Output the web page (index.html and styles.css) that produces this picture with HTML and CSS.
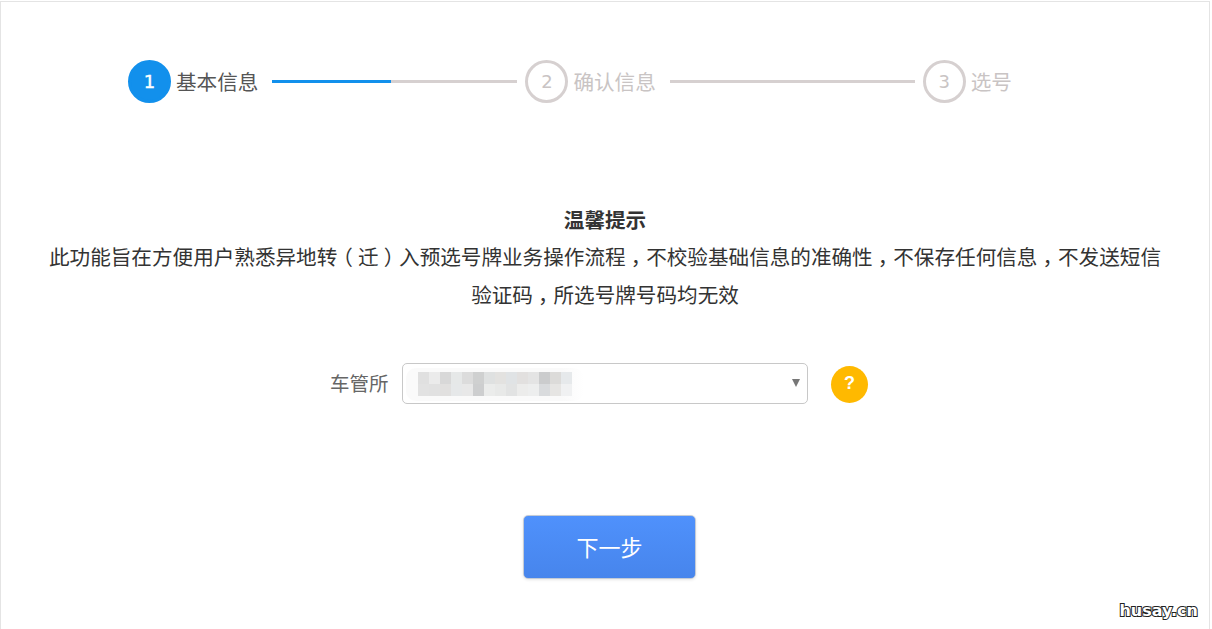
FILE: index.html
```html
<!DOCTYPE html>
<html lang="zh-CN">
<head>
    <meta charset="UTF-8">
    <meta name="viewport" content="width=device-width, initial-scale=1.0">
    <title>选号</title>
    <link rel="stylesheet" href="styles.css">
</head>
<body>
    <div class="page">
        <div class="steps">
            <div class="step active">
                <span class="step-num">1</span>
                <span class="step-name">基本信息</span>
            </div>
            <div class="step-line half"></div>
            <div class="step">
                <span class="step-num">2</span>
                <span class="step-name">确认信息</span>
            </div>
            <div class="step-line"></div>
            <div class="step">
                <span class="step-num">3</span>
                <span class="step-name">选号</span>
            </div>
        </div>

        <div class="notice">
            <h2>温馨提示</h2>
            <p>此功能旨在方便用户熟悉异地转<span class="punct">（</span>迁<span class="punct">）</span>入预选号牌业务操作流程<span class="punct">，</span>不校验基础信息的准确性<span class="punct">，</span>不保存任何信息<span class="punct">，</span>不发送短信<br>验证码<span class="punct">，</span>所选号牌号码均无效</p>
        </div>

        <div class="form-row">
            <label class="form-label">车管所</label>
            <div class="select-box">
                <div class="blur-halo">
                    <!-- pixelated value -->
                    <svg class="blur-value" width="154" height="24" viewBox="0 0 14 2" preserveAspectRatio="none" shape-rendering="crispEdges">
                        <rect x="0" y="0" width="1" height="1" fill="#e0e0e0"/>
                        <rect x="1" y="0" width="1" height="1" fill="#ebebeb"/>
                        <rect x="2" y="0" width="1" height="1" fill="#d8d8d8"/>
                        <rect x="3" y="0" width="1" height="1" fill="#e6e8e8"/>
                        <rect x="4" y="0" width="1" height="1" fill="#dcdcdc"/>
                        <rect x="5" y="0" width="1" height="1" fill="#cfd0d0"/>
                        <rect x="6" y="0" width="1" height="1" fill="#dfe1e1"/>
                        <rect x="7" y="0" width="1" height="1" fill="#e3e2e0"/>
                        <rect x="8" y="0" width="1" height="1" fill="#e0e3e5"/>
                        <rect x="9" y="0" width="1" height="1" fill="#e2e0df"/>
                        <rect x="10" y="0" width="1" height="1" fill="#e4e4e4"/>
                        <rect x="11" y="0" width="1" height="1" fill="#cbcccd"/>
                        <rect x="12" y="0" width="1" height="1" fill="#dcdbd9"/>
                        <rect x="13" y="0" width="1" height="1" fill="#e6e9eb"/>
                        <rect x="0" y="1" width="1" height="1" fill="#e2e2e2"/>
                        <rect x="1" y="1" width="1" height="1" fill="#e1e1e1"/>
                        <rect x="2" y="1" width="1" height="1" fill="#e1e0df"/>
                        <rect x="3" y="1" width="1" height="1" fill="#e6e8e9"/>
                        <rect x="4" y="1" width="1" height="1" fill="#e8e8e8"/>
                        <rect x="5" y="1" width="1" height="1" fill="#cdcecf"/>
                        <rect x="6" y="1" width="1" height="1" fill="#ebeceb"/>
                        <rect x="7" y="1" width="1" height="1" fill="#e8e9e8"/>
                        <rect x="8" y="1" width="1" height="1" fill="#e2e3e3"/>
                        <rect x="9" y="1" width="1" height="1" fill="#ececeb"/>
                        <rect x="10" y="1" width="1" height="1" fill="#edeeee"/>
                        <rect x="11" y="1" width="1" height="1" fill="#d9dbdd"/>
                        <rect x="12" y="1" width="1" height="1" fill="#e6e5e3"/>
                        <rect x="13" y="1" width="1" height="1" fill="#f0f1f2"/>
                    </svg>
                </div>
                <span class="select-arrow"></span>
            </div>
            <span class="help-btn">?</span>
        </div>

        <div class="actions">
            <button class="next-btn">下一步</button>
        </div>
    </div>
    <div class="watermark">husay.cn</div>
</body>
</html>
```

FILE: styles.css
```css
* {
    margin: 0;
    padding: 0;
    box-sizing: border-box;
}

html, body {
    height: 100%;
    overflow: hidden;
    background: #fff;
}

body {
    font-family: "Liberation Sans", "Noto Sans CJK SC", sans-serif;
    position: relative;
}

.page {
    width: 1210px;
    height: 628px;
    margin-top: 1px;
    border: 1px solid #e4e4e4;
    border-bottom: none;
    overflow: hidden;
}

/* steps */
.steps {
    display: flex;
    align-items: center;
    height: 43px;
    margin-top: 58px;
    padding-left: 127px;
}

.step {
    display: flex;
    align-items: center;
    color: #c9c4c4;
}

.step-num {
    width: 43px;
    height: 43px;
    border: 3px solid #d6d0d0;
    border-radius: 50%;
    display: flex;
    align-items: center;
    justify-content: center;
    font-size: 18px;
    font-family: "DejaVu Sans", sans-serif;
    color: #c9c4c4;
}

.step-name {
    font-size: 20.6px;
    margin: 0 0 2px 5px;
    white-space: nowrap;
}

.step.active .step-num {
    background: #1290ec;
    border-color: #1290ec;
    color: #fff;
    -webkit-text-stroke: 0.4px #fff;
}

.step.active .step-name {
    color: #555;
}

.step-line {
    width: 245px;
    height: 3px;
    margin: 0 8px 0 14px;
    background: #d6d0d0;
}

.step-line.half {
    background: linear-gradient(to right, #1290ec 119px, #d6d0d0 119px);
}

/* notice */
.notice {
    width: 1120px;
    margin: 99px auto 0;
    text-align: center;
    font-size: 20.6px;
    line-height: 38px;
    color: #333;
}

.notice h2 {
    font-size: 20.6px;
    line-height: 37px;
    font-weight: 700;
}

/* full-width punctuation sits in the middle of its cell */
.punct {
    padding: 0 0.25em;
    font-feature-settings: "halt";
}

/* form */
.form-row {
    display: flex;
    align-items: center;
    margin-top: 48px;
    padding-left: 329px;
}

.form-label {
    width: 58px;
    margin-bottom: 2px;
    font-size: 19.5px;
    color: #666;
    white-space: nowrap;
}

.select-box {
    position: relative;
    width: 406px;
    height: 41px;
    margin-left: 14px;
    border: 1px solid #c8c8c8;
    border-radius: 5px;
    padding: 4px 0 0 3px;
}

.blur-halo {
    width: 178px;
    height: 33px;
    padding: 4px 0 0 12px;
    background: linear-gradient(to right, #fafafa 88%, #fff);
    border-radius: 10px;
}

.blur-value {
    display: block;
}

.select-arrow {
    position: absolute;
    top: 15px;
    right: 7px;
    border-left: 4px solid transparent;
    border-right: 4px solid transparent;
    border-top: 8px solid #777;
}

.help-btn {
    width: 37px;
    height: 37px;
    margin: 1px 0 0 23px;
    padding-bottom: 2px;
    border-radius: 50%;
    background: #ffb900;
    color: #fff;
    font-size: 18px;
    font-weight: 700;
    font-family: "Liberation Sans", sans-serif;
    display: flex;
    align-items: center;
    justify-content: center;
}

/* button */
.actions {
    display: flex;
    margin-top: 111px;
    padding-left: 522px;
}

.next-btn {
    width: 173px;
    height: 64px;
    padding-bottom: 3px;
    border: 1px solid #c4cbd6;
    border-radius: 5px;
    background: linear-gradient(to bottom, #4f91fc, #4785ec);
    color: #fff;
    font-family: inherit;
    font-size: 22px;
    box-shadow: 0 1px 3px rgba(0, 0, 0, 0.1);
}

.watermark {
    position: absolute;
    right: 14px;
    top: 601px;
    font-family: "DejaVu Sans", sans-serif;
    font-weight: 700;
    font-size: 16px;
    line-height: 20px;
    color: #fff;
    -webkit-text-stroke: 2px #222;
    paint-order: stroke fill;
}
```
